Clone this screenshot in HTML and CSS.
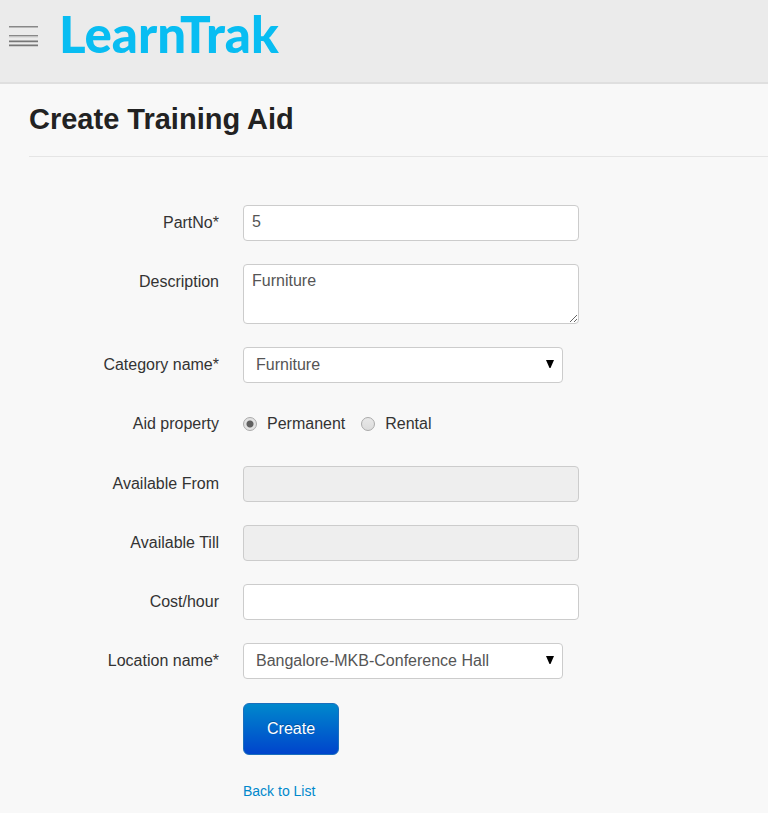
FILE: index.html
```html
<!DOCTYPE html>
<html lang="en">
<head>
<meta charset="utf-8">
<meta name="viewport" content="width=device-width, initial-scale=1">
<title>LearnTrak - Create Training Aid</title>
<link rel="stylesheet" href="styles.css">
</head>
<body>
<header class="topbar">
  <button class="menu" type="button" aria-label="Menu">
    <svg width="30" height="22" viewBox="0 0 30 22" aria-hidden="true">
      <g fill="#888">
        <rect y="1" width="29" height="1.5"/>
        <rect y="10" width="29" height="1.5"/>
        <rect y="15.500" width="29" height="1.500" fill="#777"/>
        <rect y="19.500" width="29" height="1.500" fill="#777"/>
      </g>
      <g fill="#cfcfcf"><rect y="11.500" width="29" height="1"/><rect y="17" width="29" height="1"/><rect y="21" width="29" height="1"/></g>
    </svg>
  </button>
  <a class="logo" href="#">LearnTrak</a>
</header>
<main class="page">
  <h1>Create Training Aid</h1>
  <form class="form">
    <div class="row">
      <label class="label" for="part">PartNo*</label>
      <input class="field" id="part" type="text" value="5">
    </div>
    <div class="row">
      <label class="label" for="desc">Description</label>
      <textarea class="field area" id="desc">Furniture</textarea>
    </div>
    <div class="row">
      <label class="label" for="category">Category name*</label>
      <div class="picker">
        <select class="field select" id="category"><option>Furniture</option></select>
        <svg class="arrow" width="8" height="8" viewBox="0 0 8 8" aria-hidden="true"><path d="M0 0h8L4.500 8h-1z"/></svg>
      </div>
    </div>
    <div class="row" role="radiogroup" aria-labelledby="property">
      <span class="label" id="property">Aid property</span>
      <div class="choices">
        <label class="choice"><input class="radio" type="radio" name="property" checked>Permanent</label>
        <label class="choice"><input class="radio" type="radio" name="property">Rental</label>
      </div>
    </div>
    <div class="row">
      <label class="label" for="from">Available From</label>
      <input class="field" id="from" type="text" disabled>
    </div>
    <div class="row">
      <label class="label" for="till">Available Till</label>
      <input class="field" id="till" type="text" disabled>
    </div>
    <div class="row">
      <label class="label" for="cost">Cost/hour</label>
      <input class="field" id="cost" type="text">
    </div>
    <div class="row">
      <label class="label" for="location">Location name*</label>
      <div class="picker">
        <select class="field select" id="location"><option>Bangalore-MKB-Conference Hall</option></select>
        <svg class="arrow" width="8" height="8" viewBox="0 0 8 8" aria-hidden="true"><path d="M0 0h8L4.500 8h-1z"/></svg>
      </div>
    </div>
    <div class="actions">
      <button class="create" type="submit">Create</button>
      <a class="back" href="#">Back to List</a>
    </div>
  </form>
</main>
</body>
</html>
```
FILE: styles.css
```css
* {
  box-sizing: border-box;
}

body {
  margin: 0;
  background: #f8f8f8;
  color: #333;
  font: 16px/24px "Liberation Sans", Arial, sans-serif;
}

.topbar {
  display: flex;
  align-items: flex-start;
  gap: 20px;
  min-height: 84px;
  padding: 4px 9px;
  background: #ebebeb;
  border-bottom: 2px solid #dfdfdf;
}

.menu {
  display: flex;
  margin-top: 21px;
  padding: 0;
  border: 0;
  background: none;
}

.logo {
  color: #08bdf2;
  font: 900 51px/60px Lato, sans-serif;
  text-decoration: none;
}

.page {
  padding: 16px 0 12px 29px;
}

h1 {
  margin: 0;
  padding-bottom: 17px;
  border-bottom: 1px solid #e5e5e5;
  color: #222;
  font-size: 29px;
  line-height: 39px;
}

.form {
  display: grid;
  gap: 23px;
  padding-top: 48px;
}

.row {
  display: grid;
  grid-template-columns: 190px minmax(0, 336px);
  column-gap: 24px;
}

.label {
  padding-top: 6px;
  text-align: right;
}

.field {
  width: 100%;
  height: 36px;
  margin: 0;
  padding: 5px 8px 7px;
  border: 1px solid #ccc;
  border-radius: 4px;
  background: #fff;
  color: #555;
  font: inherit;
  line-height: 22px;
}

.field:disabled {
  background: #eee;
}

.area {
  display: block;
  height: 60px;
  resize: vertical;
}

.picker {
  position: relative;
  width: 100%;
  max-width: 320px;
}

.select {
  padding: 6px 28px 6px 12px;
  appearance: none;
}

.arrow {
  position: absolute;
  top: 13px;
  right: 9px;
  pointer-events: none;
}

.choices {
  display: flex;
  gap: 16px;
  height: 37px;
  padding-top: 6px;
}

.choice {
  display: flex;
  gap: 10px;
}

.radio {
  width: 14px;
  height: 14px;
  margin: 5px 0 0;
  border: 1px solid #aaa;
  border-radius: 50%;
  background: linear-gradient(#e8e8e8, #dcdcdc);
  appearance: none;
}

.radio:checked {
  background: radial-gradient(circle, #606060 0 3px, #e2e2e2 4px);
}

.actions {
  display: flex;
  flex-direction: column;
  align-items: flex-start;
  gap: 24px;
  padding-top: 1px;
  margin-left: 214px;
}

.create {
  padding: 13px 23px;
  border: 1px solid #1a6fbd;
  border-radius: 6px;
  background: linear-gradient(#08c, #04c);
  color: #fff;
  font: inherit;
  text-shadow: 0 -1px 0 rgba(0, 0, 0, 0.25);
}

.back {
  color: #08c;
  font-size: 14px;
  text-decoration: none;
}
```
